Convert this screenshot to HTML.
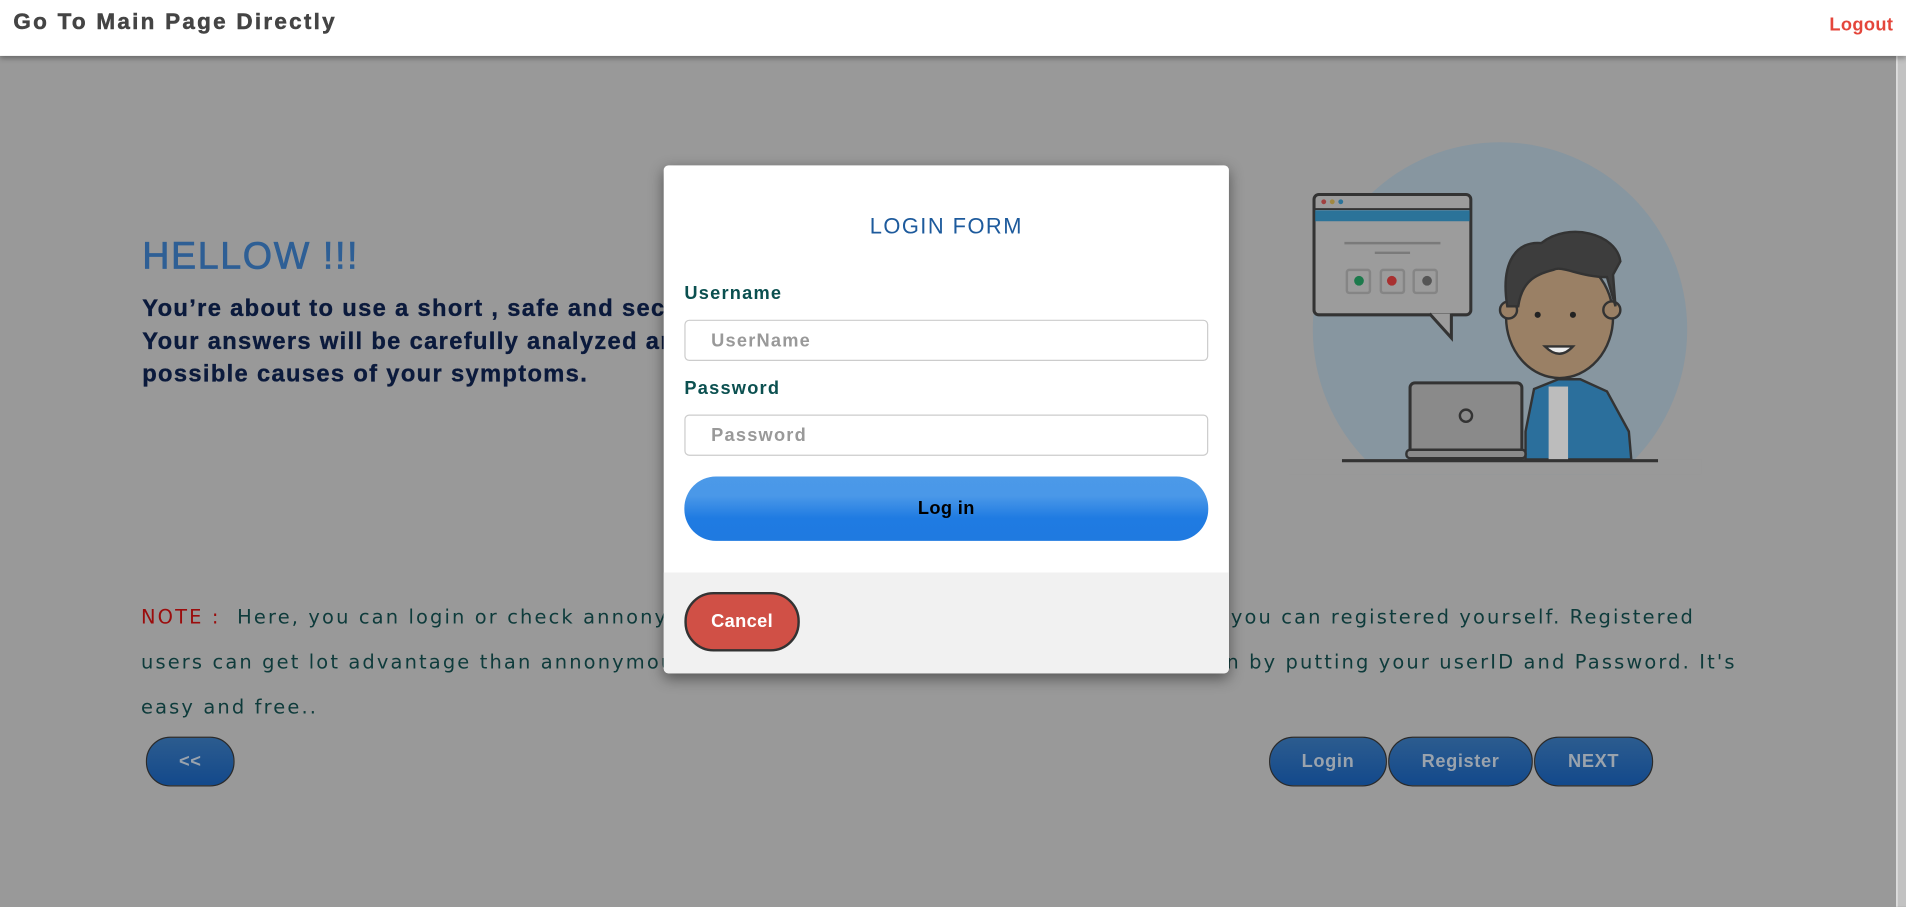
<!DOCTYPE html>
<html><head><meta charset="utf-8"><style>
*{margin:0;padding:0;box-sizing:border-box}
html,body{width:1906px;height:907px;overflow:hidden;background:#999}
#w{position:absolute;left:0;top:0;width:1568px;height:746px;transform:scale(1.21556);transform-origin:0 0;background:#999;font-family:"Liberation Sans",Arial,sans-serif}
.a{position:absolute;white-space:nowrap}
#hdr{left:0;top:0;width:1568px;height:46px;background:#fff;box-shadow:0 2px 4px rgba(0,0,0,.3);z-index:3}
#sb{left:1560px;top:46px;width:8px;height:700px;background:#c2c2c2;border-left:1px solid #eee}
.btn{position:absolute;top:606px;height:41px;border-radius:20px;border:1.5px solid #2a2a2a;background:linear-gradient(#2c5c8f,#13498b);color:#9aa3ad;font-weight:bold;font-size:15px;text-align:center;line-height:39px;letter-spacing:.5px}
.note{left:116px;font-family:"DejaVu Sans",sans-serif;font-size:16px;color:#0e3b3b;line-height:37px;letter-spacing:1.75px}
#modal{left:546px;top:136px;width:465px;height:418px;background:#fff;border-radius:4px;box-shadow:0 4px 12px rgba(0,0,0,.45);overflow:hidden;z-index:5}
.lbl{position:absolute;left:17px;font-weight:bold;font-size:15px;color:#0b5050;letter-spacing:1px}
.inp{position:absolute;left:17px;width:431px;height:34px;border:1px solid #ccc;border-radius:4px;font-weight:bold;font-size:15px;color:#999;padding-left:21px;line-height:33px;letter-spacing:1px}
</style></head><body><div id="w">
<div id="hdr" class="a">
<div class="a" style="left:11px;top:7px;font-size:18.5px;font-weight:bold;color:#444;letter-spacing:1.85px;-webkit-text-stroke:.4px #444">Go To Main Page Directly</div>
<div class="a" style="left:1505px;top:12px;font-size:15px;font-weight:bold;color:#e4463b;letter-spacing:.3px">Logout</div>
</div>
<div id="sb" class="a"></div>
<div class="a" style="left:117px;top:193px;font-size:31px;color:#2e5f95;letter-spacing:1.3px;-webkit-text-stroke:.6px #2e5f95">HELLOW !!!</div>
<div class="a" style="left:117px;top:241px;font-size:19.5px;font-weight:bold;color:#0b1a3c;line-height:27px;letter-spacing:1.1px;-webkit-text-stroke:.3px #0b1a3c">You’re about to use a short , safe and secure symptom checker.<br>Your answers will be carefully analyzed and you’ll learn about<br>possible causes of your symptoms.</div>
<div class="a note" style="top:489px"><span style="color:#9b0c0c">NOTE :</span>&nbsp; Here, you can login or check annonymously. If you want to get more facilities, then you can registered yourself. Registered</div>
<div class="a note" style="top:526px">users can get lot advantage than annonymous users. If you are already registered then login by putting your userID and Password. It's</div>
<div class="a note" style="top:563px">easy and free..</div>
<div class="btn" style="left:120px;width:73px">&lt;&lt;</div>
<div class="btn" style="left:1044px;width:97px">Login</div>
<div class="btn" style="left:1142px;width:119px">Register</div>
<div class="btn" style="left:1262px;width:98px">NEXT</div>
<svg class="a" style="left:1060px;top:110px" width="340" height="280" viewBox="1060 110 340 280">
<circle cx="1234" cy="271" r="154" fill="#8796a0"/>
<rect x="1060" y="378" width="340" height="12" fill="#999"/>
<rect x="1081" y="160" width="129" height="99" rx="4" fill="#9c9c9c" stroke="#333" stroke-width="2.5"/>
<rect x="1082" y="173" width="127" height="9" fill="#2b7399"/>
<line x1="1081" y1="172" x2="1210" y2="172" stroke="#333" stroke-width="1.5"/>
<circle cx="1089" cy="166" r="2" fill="#a04040"/><circle cx="1096" cy="166" r="2" fill="#a08840"/><circle cx="1103" cy="166" r="2" fill="#2b7399"/>
<line x1="1106" y1="200" x2="1185" y2="200" stroke="#7a7a7a" stroke-width="2"/>
<line x1="1131" y1="208" x2="1160" y2="208" stroke="#7a7a7a" stroke-width="2"/>
<rect x="1108" y="222" width="19" height="19" rx="2" fill="none" stroke="#858585" stroke-width="2"/><circle cx="1118" cy="231" r="4" fill="#1c7a4c"/>
<rect x="1136" y="222" width="19" height="19" rx="2" fill="none" stroke="#858585" stroke-width="2"/><circle cx="1145" cy="231" r="4" fill="#a83030"/>
<rect x="1163" y="222" width="19" height="19" rx="2" fill="none" stroke="#858585" stroke-width="2"/><circle cx="1174" cy="231" r="4" fill="#555"/>
<path d="M1176 258 L1194 278 L1194 258" fill="#9c9c9c" stroke="#333" stroke-width="2.5"/>
<path d="M1255 355 L1262 320 L1282 312 L1300 312 L1322 322 L1340 355 L1342 378 L1255 378 Z" fill="#2b6f9c" stroke="#333" stroke-width="2"/>
<rect x="1274" y="318" width="16" height="60" fill="#bcbcbc"/>
<ellipse cx="1283" cy="261" rx="44" ry="50" fill="#9a8065" stroke="#333" stroke-width="2"/>
<circle cx="1241" cy="255" r="7" fill="#9a8065" stroke="#333" stroke-width="2"/>
<circle cx="1326" cy="255" r="7" fill="#9a8065" stroke="#333" stroke-width="2"/>
<path d="M1240 252 C1234 215 1248 198 1268 200 C1290 182 1330 192 1333 215 L1327 226 L1329 252 L1322 228 C1300 228 1285 218 1278 222 C1262 226 1252 232 1249 252 Z" fill="#3d3d3d" stroke="#333" stroke-width="2"/>
<circle cx="1265" cy="259" r="2.5" fill="#222"/><circle cx="1294" cy="259" r="2.5" fill="#222"/>
<path d="M1271 285 Q1283 297 1294 285 Z" fill="#eee" stroke="#333" stroke-width="2"/>
<rect x="1160" y="315" width="92" height="58" rx="4" fill="#8a8a8a" stroke="#333" stroke-width="2.5"/>
<circle cx="1206" cy="342" r="5" fill="none" stroke="#333" stroke-width="2"/>
<rect x="1157" y="370" width="98" height="7" rx="3" fill="#8a8a8a" stroke="#333" stroke-width="2"/>
<line x1="1104" y1="379" x2="1364" y2="379" stroke="#333" stroke-width="2.5"/>
</svg>
<div id="modal" class="a">
<div class="a" style="left:0;width:465px;top:40px;text-align:center;font-size:18px;color:#1d5a9c;letter-spacing:1.2px">LOGIN FORM</div>
<div class="lbl" style="top:97px">Username</div>
<div class="inp" style="top:127px">UserName</div>
<div class="lbl" style="top:175px">Password</div>
<div class="inp" style="top:205px">Password</div>
<div class="a" style="left:17px;top:256px;width:431px;height:53px;border-radius:26px;background:linear-gradient(#4b99e8 0%,#4a98e8 30%,#1f7be2 65%,#1f7ae0);text-align:center;line-height:53px;font-weight:bold;font-size:15px;color:#000;letter-spacing:.3px">Log in</div>
<div class="a" style="left:0;top:335px;width:465px;height:83px;background:#f1f1f1"></div>
<div class="a" style="left:17px;top:351px;width:95px;height:49px;border-radius:24px;background:#d05046;border:2px solid #333;text-align:center;line-height:45px;color:#fff;font-weight:bold;font-size:15px;letter-spacing:.3px">Cancel</div>
</div>
</div></body></html>
